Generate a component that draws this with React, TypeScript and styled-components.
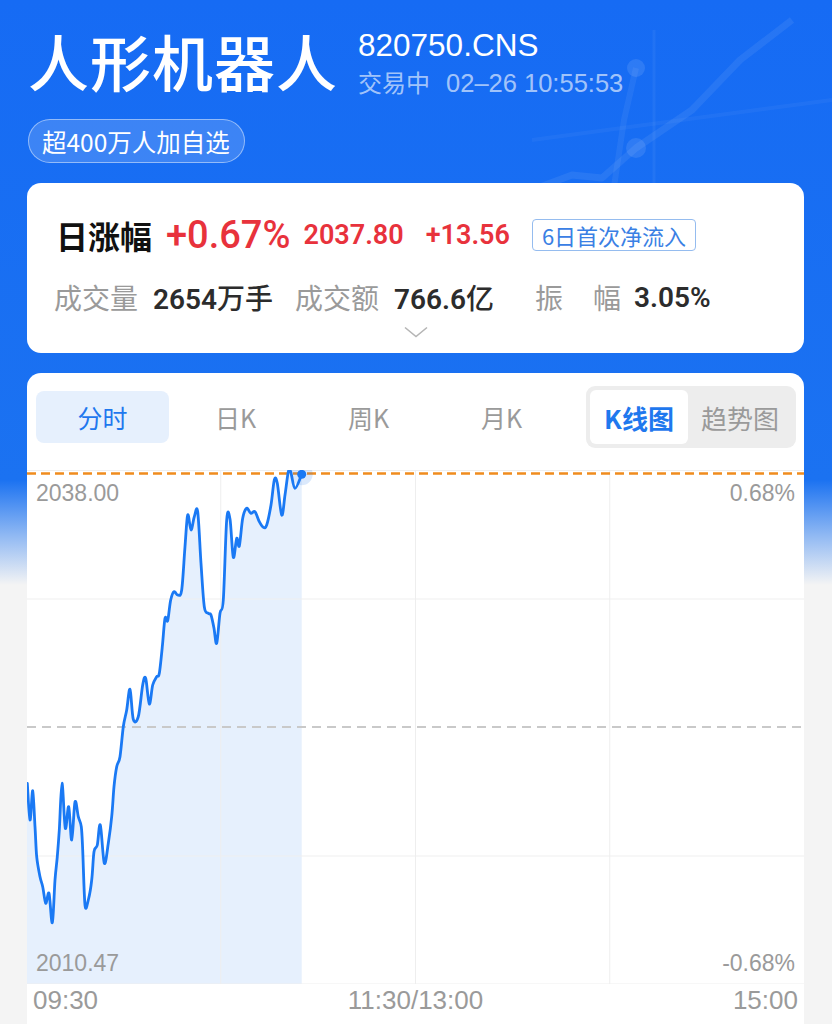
import styled, { createGlobalStyle } from "styled-components";

/*--------------------------
    Global
--------------------------*/
const GlobalStyles = createGlobalStyle`
    html, body {
        margin: 0;
        padding: 0;
        background: #f4f4f4;
    }
    body {
        font-family: "Noto Sans CJK SC", "Liberation Sans", sans-serif;
    }
`;

/*--------------------------
    Styled
--------------------------*/
const Page = styled.div`
    position: relative;
    min-height: 1024px;
    height: 1024px;
    padding: 0 28px 0 27px;
    overflow: hidden;
    box-sizing: border-box;
    background: linear-gradient(180deg, #166bf4 0px, #1b72f1 480px, #8fb8f3 535px, #f4f4f4 585px, #f4f4f4 100%);
`;
const HeaderDecor = styled.svg`
    position: absolute;
    top: 0;
    right: 0;
    pointer-events: none;
`;
const Header = styled.div`
    position: relative;
    padding: 26px 0 0 1px;
`;
const TitleRow = styled.div`
    display: flex;
    align-items: flex-start;
    height: 70px;
`;
const Title = styled.h1`
    margin: 0;
    color: #fff;
    font-size: 61px;
    line-height: 70px;
    font-weight: 500;
    letter-spacing: 1px;
`;
const Meta = styled.div`
    display: flex;
    flex-direction: column;
    margin-left: 20px;
    padding-top: 2px;
`;
const Code = styled.div`
    color: #fff;
    font-family: "Liberation Sans", sans-serif;
    font-size: 31.5px;
    line-height: 34px;
`;
const TradeTime = styled.div`
    display: flex;
    align-items: baseline;
    margin-top: 6px;
    color: rgba(255, 255, 255, 0.62);
    font-family: "Liberation Sans", "Noto Sans CJK SC", sans-serif;
    font-size: 24px;
    line-height: 30px;
`;
const TradeStamp = styled.span`
    margin-left: 16px;
    font-size: 25.5px;
`;
const FollowPill = styled.div`
    display: inline-flex;
    align-items: center;
    height: 44px;
    margin-top: 23px;
    padding: 0 14px 0 13px;
    border: 1px solid rgba(255, 255, 255, 0.45);
    border-radius: 22px;
    background-color: rgba(255, 255, 255, 0.16);
    color: #fff;
    font-size: 24.5px;
    box-sizing: border-box;
`;
const Card = styled.div`
    margin-top: 20px;
    border-radius: 14px;
    background-color: #fff;
`;
const QuoteCard = styled(Card)`
    height: 170px;
    padding: 28px 28px 0 29px;
    box-sizing: border-box;
    font-family: Roboto, "Noto Sans CJK SC", sans-serif;
`;
const QuoteRow = styled.div`
    display: flex;
    align-items: center;
    height: 48px;
`;
const QuoteLabel = styled.span`
    color: #111;
    font-family: "Noto Sans CJK SC", sans-serif;
    font-size: 32px;
    font-weight: 700;
`;
const Change = styled.span`
    margin-left: 14px;
    color: #e8323c;
    font-size: 38px;
    font-weight: 500;
`;
const Price = styled.span<{ $gap: number }>`
    margin-left: ${(p) => p.$gap}px;
    color: #e8323c;
    font-size: 27px;
    font-weight: 600;
`;
const FlowTag = styled.span`
    margin-left: 22px;
    padding: 0 9px;
    border: 1px solid #95bcef;
    border-radius: 4px;
    color: #3a80e4;
    font-family: "Noto Sans CJK SC", sans-serif;
    font-size: 22px;
    line-height: 30px;
`;
const StatRow = styled.div`
    display: grid;
    grid-template-columns: 241px 240px 240px;
    align-items: center;
    height: 48px;
    margin-top: 14px;
    margin-left: -2px;
`;
const Stat = styled.div`
    display: flex;
    align-items: center;
    gap: 13px;
`;
const StatLabel = styled.span`
    display: flex;
    justify-content: space-between;
    width: 86px;
    color: #9a9a9a;
    font-family: "Noto Sans CJK SC", sans-serif;
    font-size: 28px;
`;
const StatValue = styled.span`
    color: #2c2c2c;
    font-size: 28px;
    font-weight: 600;

    > em {
        font-style: normal;
        font-family: "Noto Sans CJK SC", sans-serif;
        font-weight: 500;
    }
`;
const ExpandRow = styled.div`
    display: flex;
    justify-content: center;
    height: 20px;
    margin-top: 1px;
    padding-right: 1px;
    align-items: center;
`;
const ChartCard = styled(Card)`
    height: 700px;
    border-radius: 14px 14px 0 0;
    padding-top: 13px;
`;
const TabBar = styled.div`
    display: flex;
    align-items: center;
    padding: 0 8px 0 9px;
`;
const Tab = styled.div<{ $active?: boolean }>`
    display: flex;
    align-items: center;
    justify-content: center;
    width: 133px;
    height: 52px;
    border-radius: 8px;
    background-color: ${(p) => (p.$active ? "#e6f0fd" : "transparent")};
    color: ${(p) => (p.$active ? "#1f78ee" : "#9a9a9a")};
    font-family: "Noto Sans CJK SC", "Liberation Sans", sans-serif;
    font-size: 25px;
`;
const Segment = styled.div`
    display: flex;
    margin-left: auto;
    padding: 4px;
    border-radius: 9px;
    background-color: #ededed;
`;
const SegmentItem = styled.div<{ $active?: boolean; $width: number }>`
    display: flex;
    align-items: center;
    justify-content: center;
    width: ${(p) => p.$width}px;
    height: 54px;
    border-radius: 6px;
    background-color: ${(p) => (p.$active ? "#fff" : "transparent")};
    color: ${(p) => (p.$active ? "#1f78ee" : "#9a9a9a")};
    font-size: 26px;
    font-weight: ${(p) => (p.$active ? 700 : 400)};
`;
const ChartArea = styled.div`
    position: relative;
    height: 514px;
    margin-top: 22px;

    > svg {
        display: block;
    }
`;
const AxisLabel = styled.span<{ $top?: boolean; $right?: boolean }>`
    position: absolute;
    ${(p) => (p.$top ? "top: 9px;" : "bottom: 7px;")}
    ${(p) => (p.$right ? "right: 9px;" : "left: 9px;")}
    color: #9a9a9a;
    font-family: "Liberation Sans", sans-serif;
    font-size: 23px;
    line-height: 28px;
`;
const TimeAxis = styled.div`
    display: flex;
    justify-content: space-between;
    padding: 0 6px;
    color: #9a9a9a;
    font-family: "Liberation Sans", sans-serif;
    font-size: 26px;
    line-height: 32px;
`;

/*--------------------------
    Chart data
--------------------------*/
const RAW: [number, number][] = [
    [27.3, 783.3], [30, 820], [32.7, 790.7], [35, 826.7], [36.7, 856.7], [40, 876.7], [42.7, 886.7],
    [45.7, 903.3], [49, 893.3], [52.3, 922.7], [55, 880], [57.3, 856.7], [59.3, 830], [62, 783.3],
    [65.3, 828.3], [68.7, 806.7], [71.7, 840], [75, 802], [78.3, 816.7], [81.3, 826.7], [82.7, 850],
    [85, 905], [88.3, 900], [91.7, 880], [94, 851.7], [97.3, 845], [100.3, 825], [104.3, 863.3],
    [108.3, 843.3], [111.7, 816.7], [114, 786.7], [116.7, 766.7], [120, 756.7], [123.3, 726.7],
    [126.7, 710], [130, 689.3], [133.3, 719.3], [138.3, 716.7], [142.7, 685], [145.7, 678.3],
    [149.3, 704], [152.7, 685], [156.7, 676.7], [159.3, 673.3], [162.3, 646.7], [165, 618.3],
    [167.7, 620.7], [170.7, 600], [174, 591.7], [177.7, 595], [181.7, 590], [185, 546.7],
    [187.7, 515], [191, 530], [194.3, 516.7], [197.7, 511.7], [201, 563.3], [204.3, 606.7],
    [208.3, 613.3], [211, 615], [214, 628.3], [216.7, 643.3], [220, 613.3], [223.3, 600],
    [226.7, 520], [230, 519], [233.3, 557.3], [236.7, 538.3], [239.3, 546], [242.7, 518.3],
    [246.7, 508.3], [250.7, 513.3], [255, 511.7], [259.3, 521.7], [263.3, 527.3], [266.7, 525],
    [271, 505], [274.3, 480], [277.3, 483.3], [281.7, 515], [285, 495], [288.3, 471.7],
    [290.7, 471.7], [295, 488.3], [301.7, 474.3],
];
const POINTS = RAW.map(([x, y]) => [x - 27, y - 470] as [number, number]);
const CHART_W = 777;
const CHART_H = 514;

const smoothPath = (pts: [number, number][]) => {
    let d = `M${pts[0][0].toFixed(1)},${pts[0][1].toFixed(1)}`;
    for (let i = 0; i < pts.length - 1; i++) {
        const p0 = pts[i - 1] || pts[i];
        const p1 = pts[i];
        const p2 = pts[i + 1];
        const p3 = pts[i + 2] || p2;
        const c1x = p1[0] + (p2[0] - p0[0]) / 6;
        const c1y = p1[1] + (p2[1] - p0[1]) / 6;
        const c2x = p2[0] - (p3[0] - p1[0]) / 6;
        const c2y = p2[1] - (p3[1] - p1[1]) / 6;
        d += ` C${c1x.toFixed(1)},${c1y.toFixed(1)} ${c2x.toFixed(1)},${c2y.toFixed(1)} ${p2[0].toFixed(1)},${p2[1].toFixed(1)}`;
    }
    return d;
};

const TABS = ["分时", "日K", "周K", "月K"];

/*--------------------------
    Parts
--------------------------*/
const IntradayChart = () => {
    const line = smoothPath(POINTS);
    const last = POINTS[POINTS.length - 1];
    const area = `${line} L${last[0]},${CHART_H} L${POINTS[0][0]},${CHART_H} L0,${CHART_H} L0,${POINTS[0][1]} Z`;
    const rows = [0, 128.5, 385.5, CHART_H - 0.5];
    const cols = [193.75, 388.5, 582.75];

    return (
        <ChartArea>
            <svg width={CHART_W} height={CHART_H} viewBox={`0 0 ${CHART_W} ${CHART_H}`}>
                <path d={area} fill="#e6f0fd" />
                {rows.map((y) => (
                    <line key={y} x1={0} x2={CHART_W} y1={y + 0.5} y2={y + 0.5} stroke="#efefef" strokeWidth={1} />
                ))}
                {cols.map((x) => (
                    <line key={x} x1={x} x2={x} y1={0} y2={CHART_H} stroke="#eeeeee" strokeWidth={1} />
                ))}
                <line x1={0} x2={CHART_W} y1={257} y2={257} stroke="#c9c9c9" strokeWidth={2} strokeDasharray="9 6" />
                <line x1={0} x2={CHART_W} y1={3.5} y2={3.5} stroke="#f08c1e" strokeWidth={2.5} strokeDasharray="9 5" />
                <path d={line} fill="none" stroke="#1a79f4" strokeWidth={2.8} strokeLinejoin="round" strokeLinecap="round" />
                <circle cx={last[0]} cy={last[1]} r={11} fill="rgba(31, 120, 238, 0.16)" />
                <circle cx={last[0]} cy={last[1]} r={4.5} fill="#1a79f4" />
            </svg>
            <AxisLabel $top>2038.00</AxisLabel>
            <AxisLabel $top $right>0.68%</AxisLabel>
            <AxisLabel>2010.47</AxisLabel>
            <AxisLabel $right>-0.68%</AxisLabel>
        </ChartArea>
    );
};

/*--------------------------
    Main
--------------------------*/
const App = () => {
    return (
        <Page>
            <GlobalStyles />
            <HeaderDecor width="300" height="200" viewBox="0 0 300 200">
                <line x1="122" y1="30" x2="122" y2="200" stroke="rgba(255,255,255,0.05)" strokeWidth="3" />
                <polyline points="0,190 40,175 70,178 104,148 160,110 208,60 260,20" fill="none" stroke="rgba(255,255,255,0.07)" strokeWidth="7" strokeLinejoin="round" />
                <polyline points="104,68 92,120 80,200" fill="none" stroke="rgba(255,255,255,0.06)" strokeWidth="6" />
                <line x1="0" y1="140" x2="300" y2="100" stroke="rgba(255,255,255,0.04)" strokeWidth="4" />
                <circle cx="104" cy="68" r="9" fill="rgba(255,255,255,0.1)" />
                <circle cx="104" cy="148" r="10" fill="rgba(255,255,255,0.1)" />
            </HeaderDecor>

            <Header>
                <TitleRow>
                    <Title>人形机器人</Title>
                    <Meta>
                        <Code>820750.CNS</Code>
                        <TradeTime>
                            <span>交易中</span>
                            <TradeStamp>02–26 10:55:53</TradeStamp>
                        </TradeTime>
                    </Meta>
                </TitleRow>
                <FollowPill>超400万人加自选</FollowPill>
            </Header>

            <QuoteCard>
                <QuoteRow>
                    <QuoteLabel>日涨幅</QuoteLabel>
                    <Change>+0.67%</Change>
                    <Price $gap={13}>2037.80</Price>
                    <Price $gap={22}>+13.56</Price>
                    <FlowTag>6日首次净流入</FlowTag>
                </QuoteRow>
                <StatRow>
                    <Stat>
                        <StatLabel>成交量</StatLabel>
                        <StatValue>2654<em>万手</em></StatValue>
                    </Stat>
                    <Stat>
                        <StatLabel>成交额</StatLabel>
                        <StatValue>766.6<em>亿</em></StatValue>
                    </Stat>
                    <Stat>
                        <StatLabel>
                            <span>振</span>
                            <span>幅</span>
                        </StatLabel>
                        <StatValue>3.05%</StatValue>
                    </Stat>
                </StatRow>
                <ExpandRow>
                    <svg width="24" height="12" viewBox="0 0 24 12">
                        <polyline points="1,1.5 12,10.5 23,1.5" fill="none" stroke="#b5b5b5" strokeWidth="1.6" />
                    </svg>
                </ExpandRow>
            </QuoteCard>

            <ChartCard>
                <TabBar>
                    {TABS.map((t, i) => (
                        <Tab key={t} $active={i === 0}>
                            {t}
                        </Tab>
                    ))}
                    <Segment>
                        <SegmentItem $active $width={98}>K线图</SegmentItem>
                        <SegmentItem $width={104}>趋势图</SegmentItem>
                    </Segment>
                </TabBar>
                <IntradayChart />
                <TimeAxis>
                    <span>09:30</span>
                    <span>11:30/13:00</span>
                    <span>15:00</span>
                </TimeAxis>
            </ChartCard>
        </Page>
    );
};

export default App;
